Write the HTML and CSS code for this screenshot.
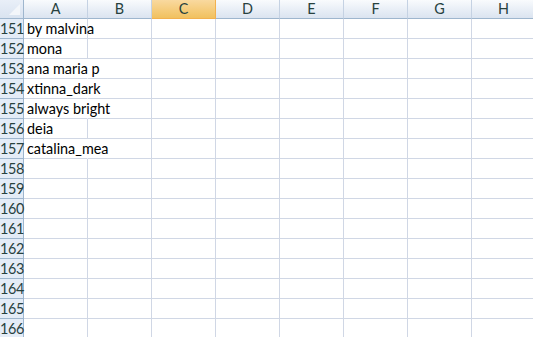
FILE: index.html
```html
<!DOCTYPE html>
<html>
<head>
<meta charset="utf-8">
<link rel="stylesheet" href="styles.css">
</head>
<body>
<div class="sheet">
  <div class="corner"><span class="tri"></span></div>
  <div class="ch">A</div><div class="ch">B</div><div class="ch sel">C</div><div class="ch">D</div><div class="ch">E</div><div class="ch">F</div><div class="ch">G</div><div class="ch">H</div>

  <div class="rh">151</div><div class="c">by malvina</div><div class="c"></div><div class="c"></div><div class="c"></div><div class="c"></div><div class="c"></div><div class="c"></div><div class="c"></div>
  <div class="rh">152</div><div class="c">mona</div><div class="c"></div><div class="c"></div><div class="c"></div><div class="c"></div><div class="c"></div><div class="c"></div><div class="c"></div>
  <div class="rh">153</div><div class="c over">ana maria p</div><div class="c"></div><div class="c"></div><div class="c"></div><div class="c"></div><div class="c"></div><div class="c"></div><div class="c"></div>
  <div class="rh">154</div><div class="c over">xtinna_dark</div><div class="c"></div><div class="c"></div><div class="c"></div><div class="c"></div><div class="c"></div><div class="c"></div><div class="c"></div>
  <div class="rh">155</div><div class="c over">always bright</div><div class="c"></div><div class="c"></div><div class="c"></div><div class="c"></div><div class="c"></div><div class="c"></div><div class="c"></div>
  <div class="rh">156</div><div class="c">deia</div><div class="c"></div><div class="c"></div><div class="c"></div><div class="c"></div><div class="c"></div><div class="c"></div><div class="c"></div>
  <div class="rh">157</div><div class="c over">catalina_mea</div><div class="c"></div><div class="c"></div><div class="c"></div><div class="c"></div><div class="c"></div><div class="c"></div><div class="c"></div>
  <div class="rh">158</div><div class="c"></div><div class="c"></div><div class="c"></div><div class="c"></div><div class="c"></div><div class="c"></div><div class="c"></div><div class="c"></div>
  <div class="rh">159</div><div class="c"></div><div class="c"></div><div class="c"></div><div class="c"></div><div class="c"></div><div class="c"></div><div class="c"></div><div class="c"></div>
  <div class="rh">160</div><div class="c"></div><div class="c"></div><div class="c"></div><div class="c"></div><div class="c"></div><div class="c"></div><div class="c"></div><div class="c"></div>
  <div class="rh">161</div><div class="c"></div><div class="c"></div><div class="c"></div><div class="c"></div><div class="c"></div><div class="c"></div><div class="c"></div><div class="c"></div>
  <div class="rh">162</div><div class="c"></div><div class="c"></div><div class="c"></div><div class="c"></div><div class="c"></div><div class="c"></div><div class="c"></div><div class="c"></div>
  <div class="rh">163</div><div class="c"></div><div class="c"></div><div class="c"></div><div class="c"></div><div class="c"></div><div class="c"></div><div class="c"></div><div class="c"></div>
  <div class="rh">164</div><div class="c"></div><div class="c"></div><div class="c"></div><div class="c"></div><div class="c"></div><div class="c"></div><div class="c"></div><div class="c"></div>
  <div class="rh">165</div><div class="c"></div><div class="c"></div><div class="c"></div><div class="c"></div><div class="c"></div><div class="c"></div><div class="c"></div><div class="c"></div>
  <div class="rh">166</div><div class="c"></div><div class="c"></div><div class="c"></div><div class="c"></div><div class="c"></div><div class="c"></div><div class="c"></div><div class="c"></div>
</div>
</body>
</html>
```
FILE: styles.css
```css
html, body { margin: 0; padding: 0; background: #fff; overflow: hidden; }
.sheet {
  width: 533px; height: 337px; overflow: hidden;
  display: grid;
  grid-template-columns: 24px repeat(8, 64px);
  grid-template-rows: 19px;
  grid-auto-rows: 20px;
  font-family: Lato, "Open Sans", sans-serif; font-size: 14.4px; color: #000;
}
.corner { box-sizing: border-box; border-right: 1px solid #9eb6ce; border-bottom: 1px solid #9eb6ce; background: linear-gradient(#e9eff8, #d9e3f0); position: relative; }
.tri { position: absolute; right: 3px; bottom: 3px; width: 0; height: 0; border-left: 11px solid transparent; border-bottom: 11px solid #f3f6fa; }
.ch { box-sizing: border-box; border-right: 1px solid #c5d2e3; border-bottom: 1px solid #9eb6ce; background: linear-gradient(#f9fbfd, #e8eef6 55%, #dbe4f0); color: #27413e; text-align: center; line-height: 18px; }
.ch.sel { background: linear-gradient(#f9d99f, #f1c15f); border-right-color: #f2b14f; border-bottom-color: #f2b14f; }
.rh { box-sizing: border-box; border-right: 1px solid #9eb6ce; border-bottom: 1px solid #9eb6ce; background: #e4ecf7; color: #27413e; text-align: center; line-height: 19px; letter-spacing: -0.4px; }
.c { box-sizing: border-box; min-width: 0; border-right: 1px solid #d0d7e5; border-bottom: 1px solid #d0d7e5; line-height: 19px; padding-left: 3px; white-space: nowrap; overflow: visible; position: relative; z-index: 1; }
.c.over { border-right-color: transparent; }
```
